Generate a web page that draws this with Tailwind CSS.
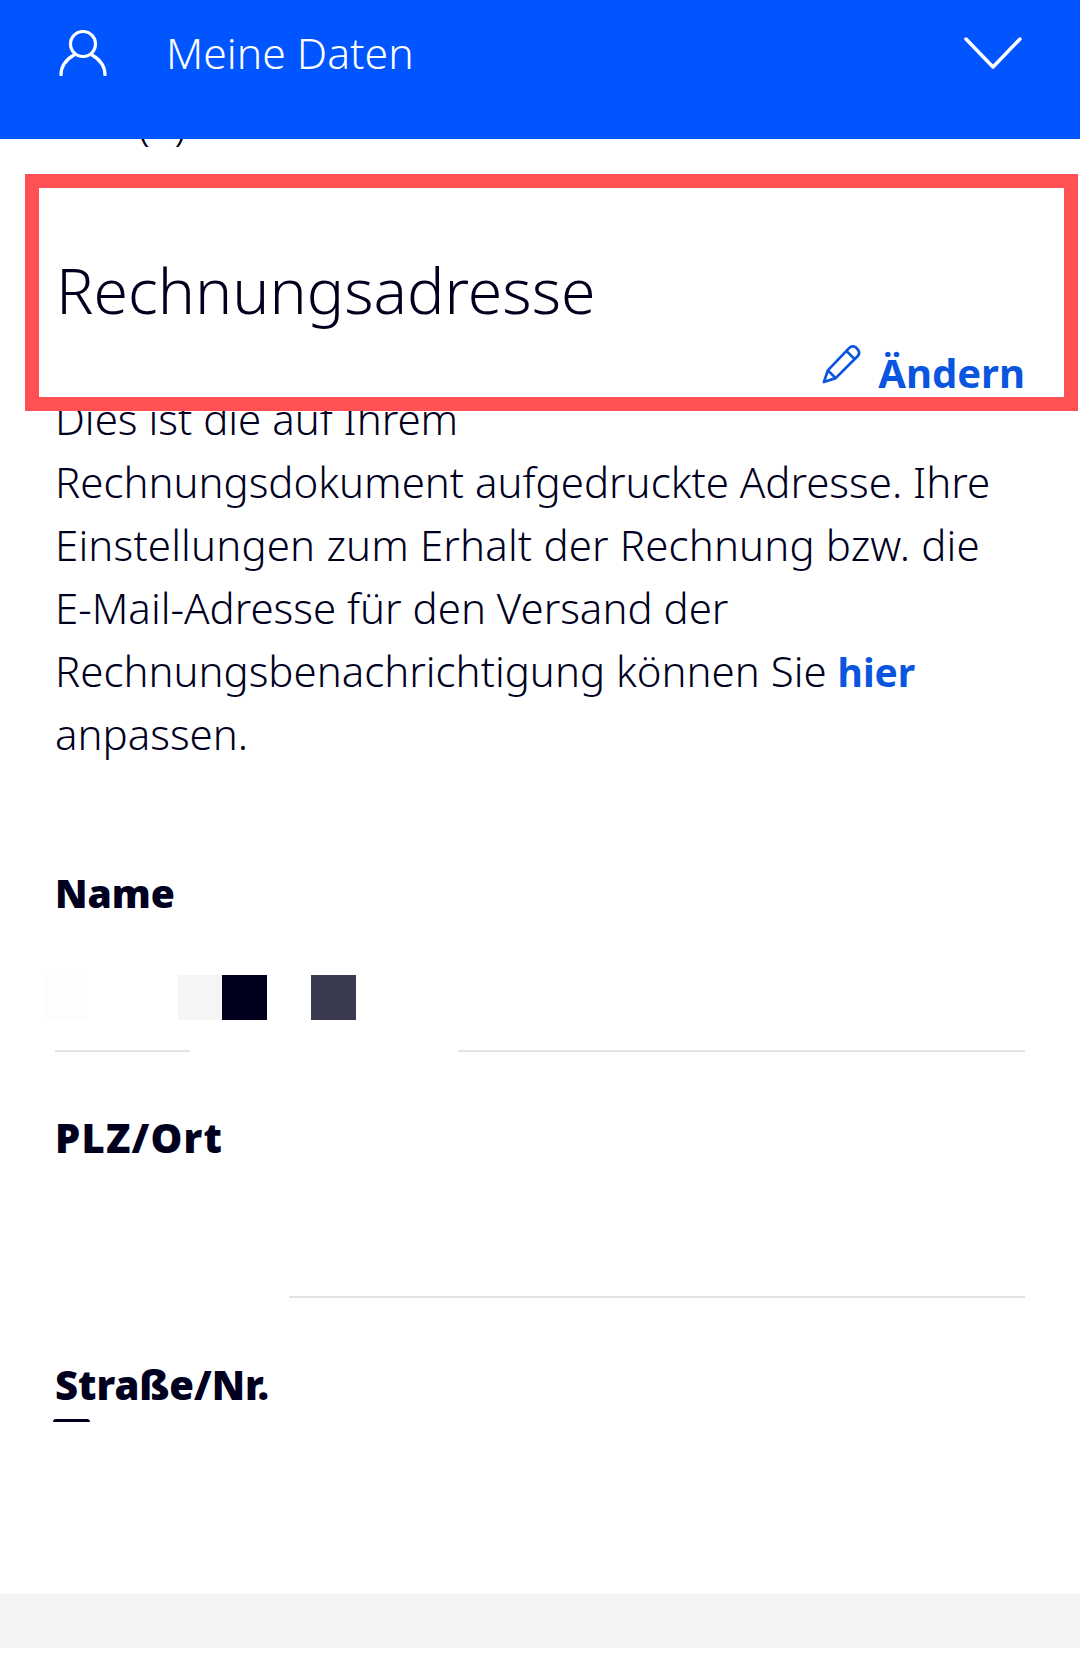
<!DOCTYPE html>
<html lang="de">
<head>
<meta charset="utf-8">
<script src="https://cdn.jsdelivr.net/npm/@tailwindcss/browser@4"></script>
</head>
<body class="bg-white">
<div class="relative w-[1080px] h-[1680px] overflow-hidden bg-white text-[#00001e] font-['Noto_Sans',sans-serif]">
  <header class="h-[139px] bg-[#0055ff] flex items-start pl-[59px] pr-[58px] text-white relative z-10">
    <svg class="mt-[30px] w-[48px] h-[46px]" viewBox="0 0 48 46" fill="none" stroke="currentColor" stroke-width="3.2" stroke-linecap="round"><ellipse cx="24" cy="14" rx="12.5" ry="12.5"/><path d="M2 45c0-10 6-16 13-20M46 45c0-10-6-16-13-20"/></svg>
    <span class="ml-[59px] mt-[25px] text-[42.7px] leading-[56px] font-light">Meine Daten</span>
    <svg class="ml-auto mt-[36px] w-[58px] h-[34px]" viewBox="0 0 58 34" fill="none" stroke="currentColor" stroke-width="3.5" stroke-linecap="round" stroke-linejoin="round"><path d="M2 3l27 28L56 3"/></svg>
  </header>
  <div class="h-[35px] overflow-hidden pl-[138px]">
    <div class="-mt-[47px] text-[42px] leading-[63px] font-light tracking-[7px]">( )</div>
  </div>
  <section class="relative z-10 ml-[25px] w-[1053px] h-[237px] border-[14px] border-[#ff5054] bg-white">
    <h2 class="pl-[17px] pt-[62px] text-[62.5px] leading-[80px] font-light">Rechnungsadresse</h2>
    <div class="absolute right-[39px] bottom-[-4px] flex items-center gap-[17px] text-[#0a55e0]">
      <svg class="w-[39px] h-[39px] -mt-[18px]" viewBox="0 0 40 40" fill="none" stroke="currentColor" stroke-width="2.8" stroke-linejoin="round"><path d="M2 38l4-12L28 3a5 5 0 0 1 8 1 5 5 0 0 1 1 7L14 34zM6 26l8 8M25 6l9 9"/></svg>
      <span class="text-[40px] leading-[56px] font-bold">Ändern</span>
    </div>
  </section>
  <p class="-mt-[24px] px-[55px] text-[42px] leading-[63px] font-light whitespace-nowrap">Dies ist die auf Ihrem<br>Rechnungsdokument aufgedruckte Adresse. Ihre<br><span class="tracking-[0.16px]">Einstellungen zum Erhalt der Rechnung bzw. die</span><br>E-Mail-Adresse für den Versand der<br>Rechnungsbenachrichtigung können Sie <b class="text-[39px] leading-[0] font-bold text-[#0a55e0]">hier</b><br>anpassen.</p>
  <div class="mt-[100px] px-[55px]">
    <div class="text-[39px] leading-[56px] font-black">Name</div>
    <div class="mt-[54px] flex h-[45px]">
      <i class="-ml-[10px] w-[43px] bg-[#fefcfe]"></i><i class="ml-[90px] w-[44px] bg-[#f5f5f5]"></i><i class="w-[45px] bg-[#00001e]"></i><i class="w-[44px]"></i><i class="w-[45px] bg-[#3a3a50]"></i>
    </div>
    <div class="relative mt-[30px] h-[2px] w-[970px] bg-[#e3e3e3]"><i class="absolute left-[135px] top-0 h-[2px] w-[268px] bg-white"></i></div>
    <div class="mt-[58px] text-[40px] leading-[56px] font-black tracking-[1.2px]">PLZ/Ort</div>
    <div class="mt-[130px] ml-[234px] h-[2px] w-[736px] bg-[#e3e3e3]"></div>
    <div class="mt-[59px] text-[40px] leading-[56px] font-black">Straße/Nr.</div>
    <div class="mt-[6px] ml-[-2px] h-[3px] w-[37px] rounded-t-full bg-[#00001e]"></div>
  </div>
  <div class="absolute left-0 top-[1594px] h-[54px] w-full bg-[#f3f4f6]"></div>
</div>
</body>
</html>
